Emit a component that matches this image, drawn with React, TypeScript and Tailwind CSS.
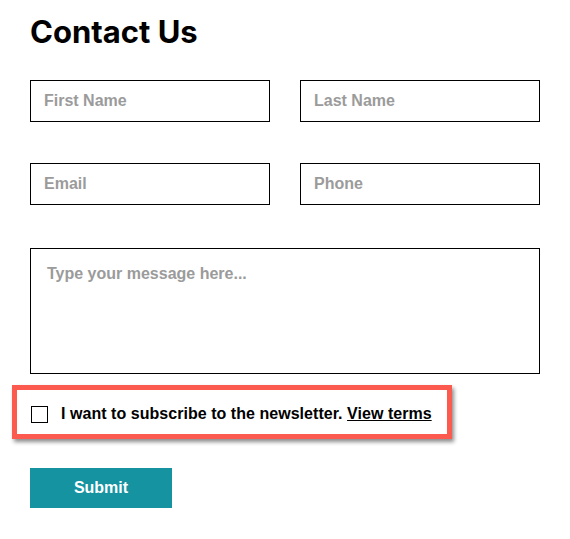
import React from 'react';

export default function App() {
    return (
        <div className="w-[570px] h-[539px] bg-white font-['Liberation_Sans',Arial,sans-serif]">
            <div className="pl-[30px] pr-[30px] pt-[14px]">
                <h1 className="font-['Inter',sans-serif] font-bold text-[31px] leading-[36px] text-black tracking-[0px]">Contact Us</h1>

                <div className="mt-[30px] grid grid-cols-2 gap-x-[30px] gap-y-[41px]">
                    <input
                        type="text"
                        placeholder="First Name"
                        className="h-[42px] border border-black px-[13px] text-[16px] font-bold placeholder:text-[#9b9b9b] outline-none"
                    />
                    <input
                        type="text"
                        placeholder="Last Name"
                        className="h-[42px] border border-black px-[13px] text-[16px] font-bold placeholder:text-[#9b9b9b] outline-none"
                    />
                    <input
                        type="email"
                        placeholder="Email"
                        className="h-[42px] border border-black px-[13px] text-[16px] font-bold placeholder:text-[#9b9b9b] outline-none"
                    />
                    <input
                        type="tel"
                        placeholder="Phone"
                        className="h-[42px] border border-black px-[13px] text-[16px] font-bold placeholder:text-[#9b9b9b] outline-none"
                    />
                </div>

                <textarea
                    placeholder="Type your message here..."
                    className="mt-[43px] block w-full h-[126px] border border-black px-[16px] py-[13px] text-[16px] font-bold placeholder:text-[#9b9b9b] outline-none resize-none"
                />
            </div>

            {/* highlighted newsletter row */}
            <div className="ml-[12px] mt-[11px] w-[440px] h-[54px] border-[5px] border-[#fd5a4f] shadow-[2px_3px_4px_rgba(0,0,0,0.45)] flex items-center pl-[14px] pt-[4px]">
                <span className="w-[17px] h-[17px] border border-black bg-white shrink-0" />
                <span className="ml-[13px] text-[16px] font-bold text-black whitespace-nowrap tracking-[0.04px]">
                    I want to subscribe to the newsletter. <a className="underline cursor-pointer">View terms</a>
                </span>
            </div>

            <div className="pl-[30px] mt-[29px]">
                <button className="w-[142px] h-[40px] bg-[#1593a1] text-white text-[16px] font-bold">Submit</button>
            </div>
        </div>
    );
}
